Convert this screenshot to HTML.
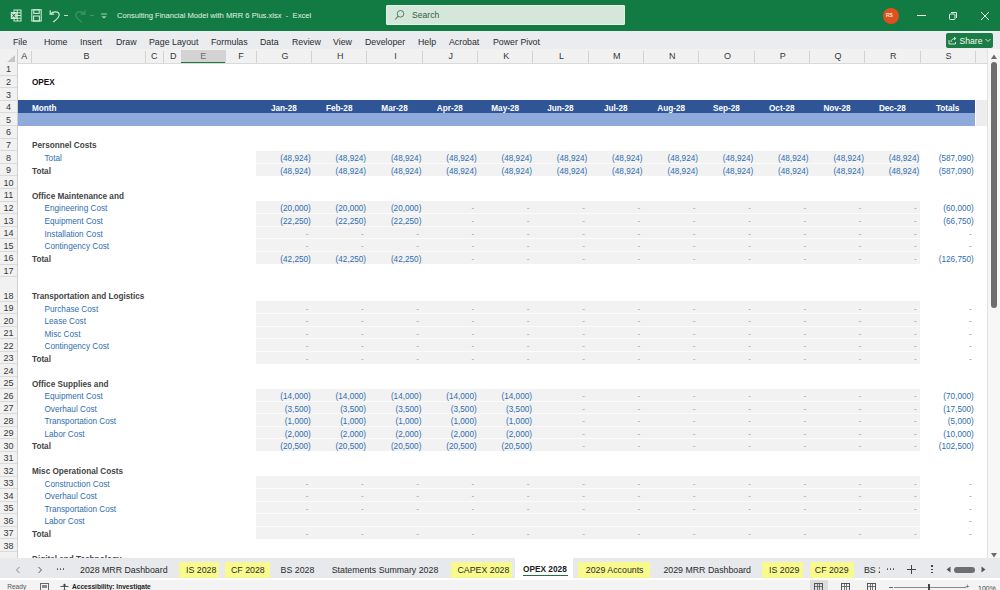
<!DOCTYPE html><html><head><meta charset="utf-8"><style>
html,body{margin:0;padding:0;width:1000px;height:590px;overflow:hidden;background:#fff;}
body{position:relative;font-family:"Liberation Sans", sans-serif;}
.ab{position:absolute;}
.t{position:absolute;white-space:nowrap;line-height:1;}
</style></head><body>
<div class="ab" style="left:0;top:0;width:1000px;height:31px;background:#127b43"></div>
<svg class="ab" style="left:10px;top:9px" width="12" height="13" viewBox="0 0 12 13"><g fill="none" stroke="#cdebd7" stroke-width="1"><rect x="4" y="1" width="7" height="11"/><line x1="7.3" y1="1" x2="7.3" y2="12"/><line x1="4" y1="3.8" x2="11" y2="3.8"/><line x1="4" y1="6.5" x2="11" y2="6.5"/><line x1="4" y1="9.2" x2="11" y2="9.2"/></g><rect x="0.8" y="3" width="6" height="7" fill="#cdebd7"/><path d="M2.3 4.8 L5.3 8.3 M5.3 4.8 L2.3 8.3" stroke="#1d5e38" stroke-width="1"/></svg>
<svg class="ab" style="left:31px;top:9px" width="11" height="13" viewBox="0 0 11 13"><g fill="none" stroke="#cdebd7" stroke-width="1.1"><rect x="0.8" y="0.8" width="9.4" height="11.2"/><rect x="2.8" y="0.8" width="5.4" height="3.6"/><rect x="2.6" y="7" width="5.8" height="5"/></g></svg>
<svg class="ab" style="left:49px;top:9px" width="12" height="14" viewBox="0 0 12 14"><path d="M1.2 1.2 L1.2 5.2 L5.2 5.2" fill="none" stroke="#cdebd7" stroke-width="1.2"/><path d="M1.5 5 C3.5 2.2 9.8 1.8 10.2 5.6 C10.5 8.5 7.5 10.5 4.2 13" fill="none" stroke="#cdebd7" stroke-width="1.2"/></svg>
<div class="ab" style="left:64px;top:14.5px;width:4px;height:1.2px;background:#b9e0c6"></div>
<svg class="ab" style="left:74px;top:9px" width="12" height="14" viewBox="0 0 12 14"><path d="M10.8 1.2 L10.8 5.2 L6.8 5.2" fill="none" stroke="#3f9763" stroke-width="1.2"/><path d="M10.5 5 C8.5 2.2 2.2 1.8 1.8 5.6 C1.5 8.5 4.5 10.5 7.8 13" fill="none" stroke="#3f9763" stroke-width="1.2"/></svg>
<div class="ab" style="left:90px;top:14.5px;width:4px;height:1.2px;background:#3f9763"></div>
<svg class="ab" style="left:100px;top:12px" width="8" height="8" viewBox="0 0 8 8"><line x1="1" y1="2" x2="7" y2="2" stroke="#9fd3b2" stroke-width="1"/><path d="M1.5 4.3 L6.5 4.3 L4 6.8Z" fill="#9fd3b2"/></svg>
<div class="t" style="left:117px;top:11.5px;font-size:7.6px;color:#e2f3e8">Consulting Financial Model with MRR 6 Plus.xlsx&nbsp; -&nbsp; Excel</div>
<div class="ab" style="left:385.5px;top:5.4px;width:239.5px;height:19.8px;background:#d5e7da;border-radius:1px;border:1px solid #e2f0e6;box-sizing:border-box"></div>
<svg class="ab" style="left:394px;top:9px" width="11" height="12" viewBox="0 0 11 12"><circle cx="6.5" cy="4.8" r="3.3" fill="none" stroke="#55806a" stroke-width="1"/><line x1="4.2" y1="7.2" x2="1.2" y2="10.5" stroke="#55806a" stroke-width="1.1"/></svg>
<div class="t" style="left:412px;top:10.5px;font-size:8.6px;color:#335f41">Search</div>
<div class="ab" style="left:883px;top:8px;width:16px;height:16px;border-radius:50%;background:#e0501e"></div>
<div class="t" style="left:886px;top:13px;font-size:5px;color:#fde3d6;font-weight:bold">RS</div>
<div class="ab" style="left:917px;top:15px;width:9px;height:1px;background:#e6f4ea"></div>
<svg class="ab" style="left:948px;top:11px" width="10" height="10" viewBox="0 0 10 10"><path d="M3 1.5 H8.5 V7" fill="none" stroke="#e6f4ea" stroke-width="1"/><rect x="1.5" y="3" width="5.5" height="5.5" fill="none" stroke="#e6f4ea" stroke-width="1" rx="0.8"/></svg>
<svg class="ab" style="left:980px;top:11px" width="10" height="10" viewBox="0 0 10 10"><path d="M1 1 L9 9 M9 1 L1 9" stroke="#e6f4ea" stroke-width="1"/></svg>
<div class="ab" style="left:0;top:31px;width:1000px;height:18px;background:#eaecef"></div>
<div class="t" style="left:13px;top:38px;font-size:8.8px;color:#2b2b2b">File</div>
<div class="t" style="left:44px;top:38px;font-size:8.8px;color:#2b2b2b">Home</div>
<div class="t" style="left:80px;top:38px;font-size:8.8px;color:#2b2b2b">Insert</div>
<div class="t" style="left:116px;top:38px;font-size:8.8px;color:#2b2b2b">Draw</div>
<div class="t" style="left:149px;top:38px;font-size:8.8px;color:#2b2b2b">Page Layout</div>
<div class="t" style="left:211px;top:38px;font-size:8.8px;color:#2b2b2b">Formulas</div>
<div class="t" style="left:260px;top:38px;font-size:8.8px;color:#2b2b2b">Data</div>
<div class="t" style="left:292px;top:38px;font-size:8.8px;color:#2b2b2b">Review</div>
<div class="t" style="left:333px;top:38px;font-size:8.8px;color:#2b2b2b">View</div>
<div class="t" style="left:365px;top:38px;font-size:8.8px;color:#2b2b2b">Developer</div>
<div class="t" style="left:418px;top:38px;font-size:8.8px;color:#2b2b2b">Help</div>
<div class="t" style="left:449px;top:38px;font-size:8.8px;color:#2b2b2b">Acrobat</div>
<div class="t" style="left:493px;top:38px;font-size:8.8px;color:#2b2b2b">Power Pivot</div>
<div class="ab" style="left:946px;top:33.2px;width:46.5px;height:15.3px;background:#1b7d45;border-radius:2px"></div>
<svg class="ab" style="left:948px;top:36px" width="9" height="9" viewBox="0 0 9 9"><path d="M1 4 V8 H7.5 V6" fill="none" stroke="#e0f2e6" stroke-width="0.9"/><path d="M3 6 C3 3.5 5 2.5 7.5 2.5 M6 1 L7.8 2.5 L6 4" fill="none" stroke="#e0f2e6" stroke-width="0.9"/></svg>
<div class="t" style="left:959.5px;top:37px;font-size:8.6px;color:#f0faf3">Share</div>
<svg class="ab" style="left:985px;top:38px" width="6" height="5" viewBox="0 0 6 5"><path d="M0.5 1 L3 3.5 L5.5 1" fill="none" stroke="#e0f2e6" stroke-width="0.9"/></svg>
<div class="ab" style="left:0;top:49px;width:988px;height:14.5px;background:#f1f1f1;border-bottom:1px solid #dadada;box-sizing:border-box"></div>
<svg class="ab" style="left:5px;top:54px" width="11" height="9" viewBox="0 0 11 9"><path d="M10 1 L10 8 L2 8 Z" fill="#c6c6c6"/></svg>
<div class="ab" style="left:30.5px;top:51px;width:0.8px;height:12px;background:#d2d2d2"></div>
<div class="t" style="left:17.5px;top:52.3px;width:13.5px;text-align:center;font-size:9px;color:#383838">A</div>
<div class="ab" style="left:144.5px;top:51px;width:0.8px;height:12px;background:#d2d2d2"></div>
<div class="t" style="left:29.5px;top:52.3px;width:114.0px;text-align:center;font-size:9px;color:#383838">B</div>
<div class="ab" style="left:163.0px;top:51px;width:0.8px;height:12px;background:#d2d2d2"></div>
<div class="t" style="left:145.0px;top:52.3px;width:18.5px;text-align:center;font-size:9px;color:#383838">C</div>
<div class="ab" style="left:180.5px;top:51px;width:0.8px;height:12px;background:#d2d2d2"></div>
<div class="t" style="left:164.5px;top:52.3px;width:17.5px;text-align:center;font-size:9px;color:#383838">D</div>
<div class="ab" style="left:181.0px;top:49.5px;width:44.5px;height:13.5px;background:#d3d3d3;border-bottom:1.5px solid #1d7a45;box-sizing:border-box"></div>
<div class="ab" style="left:225.0px;top:51px;width:0.8px;height:12px;background:#d2d2d2"></div>
<div class="t" style="left:181.0px;top:52.3px;width:44.5px;text-align:center;font-size:9px;color:#707070">E</div>
<div class="ab" style="left:255.8px;top:51px;width:0.8px;height:12px;background:#d2d2d2"></div>
<div class="t" style="left:225.5px;top:52.3px;width:30.8px;text-align:center;font-size:9px;color:#383838">F</div>
<div class="ab" style="left:311.1px;top:51px;width:0.8px;height:12px;background:#d2d2d2"></div>
<div class="t" style="left:257.3px;top:52.3px;width:55.3px;text-align:center;font-size:9px;color:#383838">G</div>
<div class="ab" style="left:366.4px;top:51px;width:0.8px;height:12px;background:#d2d2d2"></div>
<div class="t" style="left:312.6px;top:52.3px;width:55.3px;text-align:center;font-size:9px;color:#383838">H</div>
<div class="ab" style="left:421.7px;top:51px;width:0.8px;height:12px;background:#d2d2d2"></div>
<div class="t" style="left:367.9px;top:52.3px;width:55.3px;text-align:center;font-size:9px;color:#383838">I</div>
<div class="ab" style="left:477.0px;top:51px;width:0.8px;height:12px;background:#d2d2d2"></div>
<div class="t" style="left:423.2px;top:52.3px;width:55.3px;text-align:center;font-size:9px;color:#383838">J</div>
<div class="ab" style="left:532.3px;top:51px;width:0.8px;height:12px;background:#d2d2d2"></div>
<div class="t" style="left:478.5px;top:52.3px;width:55.3px;text-align:center;font-size:9px;color:#383838">K</div>
<div class="ab" style="left:587.6px;top:51px;width:0.8px;height:12px;background:#d2d2d2"></div>
<div class="t" style="left:533.8px;top:52.3px;width:55.3px;text-align:center;font-size:9px;color:#383838">L</div>
<div class="ab" style="left:643.0px;top:51px;width:0.8px;height:12px;background:#d2d2d2"></div>
<div class="t" style="left:589.1px;top:52.3px;width:55.3px;text-align:center;font-size:9px;color:#383838">M</div>
<div class="ab" style="left:698.3px;top:51px;width:0.8px;height:12px;background:#d2d2d2"></div>
<div class="t" style="left:644.5px;top:52.3px;width:55.3px;text-align:center;font-size:9px;color:#383838">N</div>
<div class="ab" style="left:753.6px;top:51px;width:0.8px;height:12px;background:#d2d2d2"></div>
<div class="t" style="left:699.8px;top:52.3px;width:55.3px;text-align:center;font-size:9px;color:#383838">O</div>
<div class="ab" style="left:808.9px;top:51px;width:0.8px;height:12px;background:#d2d2d2"></div>
<div class="t" style="left:755.1px;top:52.3px;width:55.3px;text-align:center;font-size:9px;color:#383838">P</div>
<div class="ab" style="left:864.2px;top:51px;width:0.8px;height:12px;background:#d2d2d2"></div>
<div class="t" style="left:810.4px;top:52.3px;width:55.3px;text-align:center;font-size:9px;color:#383838">Q</div>
<div class="ab" style="left:919.5px;top:51px;width:0.8px;height:12px;background:#d2d2d2"></div>
<div class="t" style="left:865.7px;top:52.3px;width:55.3px;text-align:center;font-size:9px;color:#383838">R</div>
<div class="ab" style="left:974.5px;top:51px;width:0.8px;height:12px;background:#d2d2d2"></div>
<div class="t" style="left:921.0px;top:52.3px;width:55.0px;text-align:center;font-size:9px;color:#383838">S</div>
<div class="ab" style="left:987.5px;top:51px;width:0.8px;height:12px;background:#d2d2d2"></div>
<div class="ab" style="left:17px;top:49px;width:1px;height:510px;background:#cfcfcf"></div>
<div class="ab" style="left:0;top:63.4px;width:17px;height:496px;background:#f1f1f1"></div>
<div class="ab" style="left:0;top:74.6px;width:17px;height:1px;background:#dadada"></div>
<div class="t" style="left:0;top:65.4px;width:17px;text-align:center;font-size:9px;color:#383838">1</div>
<div class="ab" style="left:0;top:87.2px;width:17px;height:1px;background:#dadada"></div>
<div class="t" style="left:0;top:78.0px;width:17px;text-align:center;font-size:9px;color:#383838">2</div>
<div class="ab" style="left:0;top:99.8px;width:17px;height:1px;background:#dadada"></div>
<div class="t" style="left:0;top:90.6px;width:17px;text-align:center;font-size:9px;color:#383838">3</div>
<div class="ab" style="left:0;top:112.4px;width:17px;height:1px;background:#dadada"></div>
<div class="t" style="left:0;top:103.2px;width:17px;text-align:center;font-size:9px;color:#383838">4</div>
<div class="ab" style="left:0;top:125.0px;width:17px;height:1px;background:#dadada"></div>
<div class="t" style="left:0;top:115.8px;width:17px;text-align:center;font-size:9px;color:#383838">5</div>
<div class="ab" style="left:0;top:137.6px;width:17px;height:1px;background:#dadada"></div>
<div class="t" style="left:0;top:128.4px;width:17px;text-align:center;font-size:9px;color:#383838">6</div>
<div class="ab" style="left:0;top:150.2px;width:17px;height:1px;background:#dadada"></div>
<div class="t" style="left:0;top:141.0px;width:17px;text-align:center;font-size:9px;color:#383838">7</div>
<div class="ab" style="left:0;top:162.8px;width:17px;height:1px;background:#dadada"></div>
<div class="t" style="left:0;top:153.6px;width:17px;text-align:center;font-size:9px;color:#383838">8</div>
<div class="ab" style="left:0;top:175.4px;width:17px;height:1px;background:#dadada"></div>
<div class="t" style="left:0;top:166.2px;width:17px;text-align:center;font-size:9px;color:#383838">9</div>
<div class="ab" style="left:0;top:188.0px;width:17px;height:1px;background:#dadada"></div>
<div class="t" style="left:0;top:178.8px;width:17px;text-align:center;font-size:9px;color:#383838">10</div>
<div class="ab" style="left:0;top:200.6px;width:17px;height:1px;background:#dadada"></div>
<div class="t" style="left:0;top:191.4px;width:17px;text-align:center;font-size:9px;color:#383838">11</div>
<div class="ab" style="left:0;top:213.2px;width:17px;height:1px;background:#dadada"></div>
<div class="t" style="left:0;top:204.0px;width:17px;text-align:center;font-size:9px;color:#383838">12</div>
<div class="ab" style="left:0;top:225.8px;width:17px;height:1px;background:#dadada"></div>
<div class="t" style="left:0;top:216.6px;width:17px;text-align:center;font-size:9px;color:#383838">13</div>
<div class="ab" style="left:0;top:238.4px;width:17px;height:1px;background:#dadada"></div>
<div class="t" style="left:0;top:229.2px;width:17px;text-align:center;font-size:9px;color:#383838">14</div>
<div class="ab" style="left:0;top:251.0px;width:17px;height:1px;background:#dadada"></div>
<div class="t" style="left:0;top:241.8px;width:17px;text-align:center;font-size:9px;color:#383838">15</div>
<div class="ab" style="left:0;top:263.6px;width:17px;height:1px;background:#dadada"></div>
<div class="t" style="left:0;top:254.4px;width:17px;text-align:center;font-size:9px;color:#383838">16</div>
<div class="ab" style="left:0;top:276.2px;width:17px;height:1px;background:#dadada"></div>
<div class="t" style="left:0;top:267.0px;width:17px;text-align:center;font-size:9px;color:#383838">17</div>
<div class="ab" style="left:0;top:300.8px;width:17px;height:1px;background:#dadada"></div>
<div class="t" style="left:0;top:291.7px;width:17px;text-align:center;font-size:9px;color:#383838">18</div>
<div class="ab" style="left:0;top:313.3px;width:17px;height:1px;background:#dadada"></div>
<div class="t" style="left:0;top:304.2px;width:17px;text-align:center;font-size:9px;color:#383838">19</div>
<div class="ab" style="left:0;top:325.8px;width:17px;height:1px;background:#dadada"></div>
<div class="t" style="left:0;top:316.7px;width:17px;text-align:center;font-size:9px;color:#383838">20</div>
<div class="ab" style="left:0;top:338.3px;width:17px;height:1px;background:#dadada"></div>
<div class="t" style="left:0;top:329.2px;width:17px;text-align:center;font-size:9px;color:#383838">21</div>
<div class="ab" style="left:0;top:350.8px;width:17px;height:1px;background:#dadada"></div>
<div class="t" style="left:0;top:341.7px;width:17px;text-align:center;font-size:9px;color:#383838">22</div>
<div class="ab" style="left:0;top:363.3px;width:17px;height:1px;background:#dadada"></div>
<div class="t" style="left:0;top:354.2px;width:17px;text-align:center;font-size:9px;color:#383838">23</div>
<div class="ab" style="left:0;top:375.8px;width:17px;height:1px;background:#dadada"></div>
<div class="t" style="left:0;top:366.7px;width:17px;text-align:center;font-size:9px;color:#383838">24</div>
<div class="ab" style="left:0;top:388.3px;width:17px;height:1px;background:#dadada"></div>
<div class="t" style="left:0;top:379.2px;width:17px;text-align:center;font-size:9px;color:#383838">25</div>
<div class="ab" style="left:0;top:400.8px;width:17px;height:1px;background:#dadada"></div>
<div class="t" style="left:0;top:391.7px;width:17px;text-align:center;font-size:9px;color:#383838">26</div>
<div class="ab" style="left:0;top:413.3px;width:17px;height:1px;background:#dadada"></div>
<div class="t" style="left:0;top:404.2px;width:17px;text-align:center;font-size:9px;color:#383838">27</div>
<div class="ab" style="left:0;top:425.8px;width:17px;height:1px;background:#dadada"></div>
<div class="t" style="left:0;top:416.7px;width:17px;text-align:center;font-size:9px;color:#383838">28</div>
<div class="ab" style="left:0;top:438.3px;width:17px;height:1px;background:#dadada"></div>
<div class="t" style="left:0;top:429.2px;width:17px;text-align:center;font-size:9px;color:#383838">29</div>
<div class="ab" style="left:0;top:450.8px;width:17px;height:1px;background:#dadada"></div>
<div class="t" style="left:0;top:441.7px;width:17px;text-align:center;font-size:9px;color:#383838">30</div>
<div class="ab" style="left:0;top:463.3px;width:17px;height:1px;background:#dadada"></div>
<div class="t" style="left:0;top:454.2px;width:17px;text-align:center;font-size:9px;color:#383838">31</div>
<div class="ab" style="left:0;top:475.8px;width:17px;height:1px;background:#dadada"></div>
<div class="t" style="left:0;top:466.7px;width:17px;text-align:center;font-size:9px;color:#383838">32</div>
<div class="ab" style="left:0;top:488.3px;width:17px;height:1px;background:#dadada"></div>
<div class="t" style="left:0;top:479.2px;width:17px;text-align:center;font-size:9px;color:#383838">33</div>
<div class="ab" style="left:0;top:500.8px;width:17px;height:1px;background:#dadada"></div>
<div class="t" style="left:0;top:491.7px;width:17px;text-align:center;font-size:9px;color:#383838">34</div>
<div class="ab" style="left:0;top:513.3px;width:17px;height:1px;background:#dadada"></div>
<div class="t" style="left:0;top:504.2px;width:17px;text-align:center;font-size:9px;color:#383838">35</div>
<div class="ab" style="left:0;top:525.8px;width:17px;height:1px;background:#dadada"></div>
<div class="t" style="left:0;top:516.7px;width:17px;text-align:center;font-size:9px;color:#383838">36</div>
<div class="ab" style="left:0;top:538.3px;width:17px;height:1px;background:#dadada"></div>
<div class="t" style="left:0;top:529.2px;width:17px;text-align:center;font-size:9px;color:#383838">37</div>
<div class="ab" style="left:0;top:550.8px;width:17px;height:1px;background:#dadada"></div>
<div class="t" style="left:0;top:541.7px;width:17px;text-align:center;font-size:9px;color:#383838">38</div>
<div class="ab" style="left:0;top:563.3px;width:17px;height:1px;background:#dadada"></div>
<div class="t" style="left:32.0px;top:79.4px;font-size:8.2px;color:#111;font-weight:bold">OPEX</div>
<div class="ab" style="left:18px;top:100.1px;width:957px;height:12.7px;background:#2f5597"></div>
<div class="ab" style="left:18px;top:113.3px;width:957px;height:12.7px;background:#8eaadb"></div>
<div class="t" style="left:32.0px;top:104.5px;font-size:8.2px;color:#fff;font-weight:bold">Month</div>
<div class="ab" style="left:975.5px;top:100px;width:11.5px;height:25.5px;background:#ededed"></div>
<div class="t" style="left:256.3px;top:104.5px;width:55.3px;text-align:center;font-size:8.2px;color:#fff;font-weight:bold">Jan-28</div>
<div class="t" style="left:311.6px;top:104.5px;width:55.3px;text-align:center;font-size:8.2px;color:#fff;font-weight:bold">Feb-28</div>
<div class="t" style="left:366.9px;top:104.5px;width:55.3px;text-align:center;font-size:8.2px;color:#fff;font-weight:bold">Mar-28</div>
<div class="t" style="left:422.2px;top:104.5px;width:55.3px;text-align:center;font-size:8.2px;color:#fff;font-weight:bold">Apr-28</div>
<div class="t" style="left:477.5px;top:104.5px;width:55.3px;text-align:center;font-size:8.2px;color:#fff;font-weight:bold">May-28</div>
<div class="t" style="left:532.8px;top:104.5px;width:55.3px;text-align:center;font-size:8.2px;color:#fff;font-weight:bold">Jun-28</div>
<div class="t" style="left:588.1px;top:104.5px;width:55.3px;text-align:center;font-size:8.2px;color:#fff;font-weight:bold">Jul-28</div>
<div class="t" style="left:643.5px;top:104.5px;width:55.3px;text-align:center;font-size:8.2px;color:#fff;font-weight:bold">Aug-28</div>
<div class="t" style="left:698.8px;top:104.5px;width:55.3px;text-align:center;font-size:8.2px;color:#fff;font-weight:bold">Sep-28</div>
<div class="t" style="left:754.1px;top:104.5px;width:55.3px;text-align:center;font-size:8.2px;color:#fff;font-weight:bold">Oct-28</div>
<div class="t" style="left:809.4px;top:104.5px;width:55.3px;text-align:center;font-size:8.2px;color:#fff;font-weight:bold">Nov-28</div>
<div class="t" style="left:864.7px;top:104.5px;width:55.3px;text-align:center;font-size:8.2px;color:#fff;font-weight:bold">Dec-28</div>
<div class="t" style="left:920.0px;top:104.5px;width:55.3px;text-align:center;font-size:8.2px;color:#fff;font-weight:bold">Totals</div>
<div class="t" style="left:32.0px;top:142.4px;font-size:8.2px;color:#444444;font-weight:bold">Personnel Costs</div>
<div class="ab" style="left:256px;top:150.7px;width:663.6px;height:25.2px;background:#f2f2f2"></div>
<div class="ab" style="left:256px;top:162.7px;width:663.6px;height:1px;background:#fbfbfb"></div>
<div class="t" style="left:44.5px;top:155.0px;font-size:8.2px;color:#2f6eb0;font-weight:normal">Total</div>
<div class="t" style="left:256.3px;top:155.0px;width:54.5px;text-align:right;font-size:8.2px;color:#2f6eb0;font-weight:normal">(48,924)</div>
<div class="t" style="left:311.6px;top:155.0px;width:54.5px;text-align:right;font-size:8.2px;color:#2f6eb0;font-weight:normal">(48,924)</div>
<div class="t" style="left:366.9px;top:155.0px;width:54.5px;text-align:right;font-size:8.2px;color:#2f6eb0;font-weight:normal">(48,924)</div>
<div class="t" style="left:422.2px;top:155.0px;width:54.5px;text-align:right;font-size:8.2px;color:#2f6eb0;font-weight:normal">(48,924)</div>
<div class="t" style="left:477.5px;top:155.0px;width:54.5px;text-align:right;font-size:8.2px;color:#2f6eb0;font-weight:normal">(48,924)</div>
<div class="t" style="left:532.8px;top:155.0px;width:54.5px;text-align:right;font-size:8.2px;color:#2f6eb0;font-weight:normal">(48,924)</div>
<div class="t" style="left:588.1px;top:155.0px;width:54.5px;text-align:right;font-size:8.2px;color:#2f6eb0;font-weight:normal">(48,924)</div>
<div class="t" style="left:643.5px;top:155.0px;width:54.5px;text-align:right;font-size:8.2px;color:#2f6eb0;font-weight:normal">(48,924)</div>
<div class="t" style="left:698.8px;top:155.0px;width:54.5px;text-align:right;font-size:8.2px;color:#2f6eb0;font-weight:normal">(48,924)</div>
<div class="t" style="left:754.1px;top:155.0px;width:54.5px;text-align:right;font-size:8.2px;color:#2f6eb0;font-weight:normal">(48,924)</div>
<div class="t" style="left:809.4px;top:155.0px;width:54.5px;text-align:right;font-size:8.2px;color:#2f6eb0;font-weight:normal">(48,924)</div>
<div class="t" style="left:864.7px;top:155.0px;width:54.5px;text-align:right;font-size:8.2px;color:#2f6eb0;font-weight:normal">(48,924)</div>
<div class="t" style="left:920.0px;top:155.0px;width:53.8px;text-align:right;font-size:8.2px;color:#2f6eb0;font-weight:normal">(587,090)</div>
<div class="t" style="left:32.0px;top:167.6px;font-size:8.2px;color:#444444;font-weight:bold">Total</div>
<div class="t" style="left:256.3px;top:167.6px;width:54.5px;text-align:right;font-size:8.2px;color:#2f6eb0;font-weight:normal">(48,924)</div>
<div class="t" style="left:311.6px;top:167.6px;width:54.5px;text-align:right;font-size:8.2px;color:#2f6eb0;font-weight:normal">(48,924)</div>
<div class="t" style="left:366.9px;top:167.6px;width:54.5px;text-align:right;font-size:8.2px;color:#2f6eb0;font-weight:normal">(48,924)</div>
<div class="t" style="left:422.2px;top:167.6px;width:54.5px;text-align:right;font-size:8.2px;color:#2f6eb0;font-weight:normal">(48,924)</div>
<div class="t" style="left:477.5px;top:167.6px;width:54.5px;text-align:right;font-size:8.2px;color:#2f6eb0;font-weight:normal">(48,924)</div>
<div class="t" style="left:532.8px;top:167.6px;width:54.5px;text-align:right;font-size:8.2px;color:#2f6eb0;font-weight:normal">(48,924)</div>
<div class="t" style="left:588.1px;top:167.6px;width:54.5px;text-align:right;font-size:8.2px;color:#2f6eb0;font-weight:normal">(48,924)</div>
<div class="t" style="left:643.5px;top:167.6px;width:54.5px;text-align:right;font-size:8.2px;color:#2f6eb0;font-weight:normal">(48,924)</div>
<div class="t" style="left:698.8px;top:167.6px;width:54.5px;text-align:right;font-size:8.2px;color:#2f6eb0;font-weight:normal">(48,924)</div>
<div class="t" style="left:754.1px;top:167.6px;width:54.5px;text-align:right;font-size:8.2px;color:#2f6eb0;font-weight:normal">(48,924)</div>
<div class="t" style="left:809.4px;top:167.6px;width:54.5px;text-align:right;font-size:8.2px;color:#2f6eb0;font-weight:normal">(48,924)</div>
<div class="t" style="left:864.7px;top:167.6px;width:54.5px;text-align:right;font-size:8.2px;color:#2f6eb0;font-weight:normal">(48,924)</div>
<div class="t" style="left:920.0px;top:167.6px;width:53.8px;text-align:right;font-size:8.2px;color:#2f6eb0;font-weight:normal">(587,090)</div>
<div class="t" style="left:32.0px;top:192.8px;font-size:8.2px;color:#444444;font-weight:bold">Office Maintenance and</div>
<div class="ab" style="left:256px;top:201.1px;width:663.6px;height:63.0px;background:#f2f2f2"></div>
<div class="ab" style="left:256px;top:213.1px;width:663.6px;height:1px;background:#fbfbfb"></div>
<div class="ab" style="left:256px;top:225.7px;width:663.6px;height:1px;background:#fbfbfb"></div>
<div class="ab" style="left:256px;top:238.3px;width:663.6px;height:1px;background:#fbfbfb"></div>
<div class="ab" style="left:256px;top:250.9px;width:663.6px;height:1px;background:#fbfbfb"></div>
<div class="t" style="left:44.5px;top:205.4px;font-size:8.2px;color:#2f6eb0;font-weight:normal">Engineering Cost</div>
<div class="t" style="left:256.3px;top:205.4px;width:54.5px;text-align:right;font-size:8.2px;color:#2f6eb0;font-weight:normal">(20,000)</div>
<div class="t" style="left:311.6px;top:205.4px;width:54.5px;text-align:right;font-size:8.2px;color:#2f6eb0;font-weight:normal">(20,000)</div>
<div class="t" style="left:366.9px;top:205.4px;width:54.5px;text-align:right;font-size:8.2px;color:#2f6eb0;font-weight:normal">(20,000)</div>
<div class="t" style="left:422.2px;top:205.4px;width:52.1px;text-align:right;font-size:8.2px;color:#a6a6a6">-</div>
<div class="t" style="left:477.5px;top:205.4px;width:52.1px;text-align:right;font-size:8.2px;color:#a6a6a6">-</div>
<div class="t" style="left:532.8px;top:205.4px;width:52.1px;text-align:right;font-size:8.2px;color:#a6a6a6">-</div>
<div class="t" style="left:588.1px;top:205.4px;width:52.1px;text-align:right;font-size:8.2px;color:#a6a6a6">-</div>
<div class="t" style="left:643.5px;top:205.4px;width:52.1px;text-align:right;font-size:8.2px;color:#a6a6a6">-</div>
<div class="t" style="left:698.8px;top:205.4px;width:52.1px;text-align:right;font-size:8.2px;color:#a6a6a6">-</div>
<div class="t" style="left:754.1px;top:205.4px;width:52.1px;text-align:right;font-size:8.2px;color:#a6a6a6">-</div>
<div class="t" style="left:809.4px;top:205.4px;width:52.1px;text-align:right;font-size:8.2px;color:#a6a6a6">-</div>
<div class="t" style="left:864.7px;top:205.4px;width:52.1px;text-align:right;font-size:8.2px;color:#a6a6a6">-</div>
<div class="t" style="left:920.0px;top:205.4px;width:53.8px;text-align:right;font-size:8.2px;color:#2f6eb0;font-weight:normal">(60,000)</div>
<div class="t" style="left:44.5px;top:218.0px;font-size:8.2px;color:#2f6eb0;font-weight:normal">Equipment Cost</div>
<div class="t" style="left:256.3px;top:218.0px;width:54.5px;text-align:right;font-size:8.2px;color:#2f6eb0;font-weight:normal">(22,250)</div>
<div class="t" style="left:311.6px;top:218.0px;width:54.5px;text-align:right;font-size:8.2px;color:#2f6eb0;font-weight:normal">(22,250)</div>
<div class="t" style="left:366.9px;top:218.0px;width:54.5px;text-align:right;font-size:8.2px;color:#2f6eb0;font-weight:normal">(22,250)</div>
<div class="t" style="left:422.2px;top:218.0px;width:52.1px;text-align:right;font-size:8.2px;color:#a6a6a6">-</div>
<div class="t" style="left:477.5px;top:218.0px;width:52.1px;text-align:right;font-size:8.2px;color:#a6a6a6">-</div>
<div class="t" style="left:532.8px;top:218.0px;width:52.1px;text-align:right;font-size:8.2px;color:#a6a6a6">-</div>
<div class="t" style="left:588.1px;top:218.0px;width:52.1px;text-align:right;font-size:8.2px;color:#a6a6a6">-</div>
<div class="t" style="left:643.5px;top:218.0px;width:52.1px;text-align:right;font-size:8.2px;color:#a6a6a6">-</div>
<div class="t" style="left:698.8px;top:218.0px;width:52.1px;text-align:right;font-size:8.2px;color:#a6a6a6">-</div>
<div class="t" style="left:754.1px;top:218.0px;width:52.1px;text-align:right;font-size:8.2px;color:#a6a6a6">-</div>
<div class="t" style="left:809.4px;top:218.0px;width:52.1px;text-align:right;font-size:8.2px;color:#a6a6a6">-</div>
<div class="t" style="left:864.7px;top:218.0px;width:52.1px;text-align:right;font-size:8.2px;color:#a6a6a6">-</div>
<div class="t" style="left:920.0px;top:218.0px;width:53.8px;text-align:right;font-size:8.2px;color:#2f6eb0;font-weight:normal">(66,750)</div>
<div class="t" style="left:44.5px;top:230.6px;font-size:8.2px;color:#2f6eb0;font-weight:normal">Installation Cost</div>
<div class="t" style="left:256.3px;top:230.6px;width:52.1px;text-align:right;font-size:8.2px;color:#a6a6a6">-</div>
<div class="t" style="left:311.6px;top:230.6px;width:52.1px;text-align:right;font-size:8.2px;color:#a6a6a6">-</div>
<div class="t" style="left:366.9px;top:230.6px;width:52.1px;text-align:right;font-size:8.2px;color:#a6a6a6">-</div>
<div class="t" style="left:422.2px;top:230.6px;width:52.1px;text-align:right;font-size:8.2px;color:#a6a6a6">-</div>
<div class="t" style="left:477.5px;top:230.6px;width:52.1px;text-align:right;font-size:8.2px;color:#a6a6a6">-</div>
<div class="t" style="left:532.8px;top:230.6px;width:52.1px;text-align:right;font-size:8.2px;color:#a6a6a6">-</div>
<div class="t" style="left:588.1px;top:230.6px;width:52.1px;text-align:right;font-size:8.2px;color:#a6a6a6">-</div>
<div class="t" style="left:643.5px;top:230.6px;width:52.1px;text-align:right;font-size:8.2px;color:#a6a6a6">-</div>
<div class="t" style="left:698.8px;top:230.6px;width:52.1px;text-align:right;font-size:8.2px;color:#a6a6a6">-</div>
<div class="t" style="left:754.1px;top:230.6px;width:52.1px;text-align:right;font-size:8.2px;color:#a6a6a6">-</div>
<div class="t" style="left:809.4px;top:230.6px;width:52.1px;text-align:right;font-size:8.2px;color:#a6a6a6">-</div>
<div class="t" style="left:864.7px;top:230.6px;width:52.1px;text-align:right;font-size:8.2px;color:#a6a6a6">-</div>
<div class="t" style="left:920.0px;top:230.6px;width:51.8px;text-align:right;font-size:8.2px;color:#9c9c9c">-</div>
<div class="t" style="left:44.5px;top:243.2px;font-size:8.2px;color:#2f6eb0;font-weight:normal">Contingency Cost</div>
<div class="t" style="left:256.3px;top:243.2px;width:52.1px;text-align:right;font-size:8.2px;color:#a6a6a6">-</div>
<div class="t" style="left:311.6px;top:243.2px;width:52.1px;text-align:right;font-size:8.2px;color:#a6a6a6">-</div>
<div class="t" style="left:366.9px;top:243.2px;width:52.1px;text-align:right;font-size:8.2px;color:#a6a6a6">-</div>
<div class="t" style="left:422.2px;top:243.2px;width:52.1px;text-align:right;font-size:8.2px;color:#a6a6a6">-</div>
<div class="t" style="left:477.5px;top:243.2px;width:52.1px;text-align:right;font-size:8.2px;color:#a6a6a6">-</div>
<div class="t" style="left:532.8px;top:243.2px;width:52.1px;text-align:right;font-size:8.2px;color:#a6a6a6">-</div>
<div class="t" style="left:588.1px;top:243.2px;width:52.1px;text-align:right;font-size:8.2px;color:#a6a6a6">-</div>
<div class="t" style="left:643.5px;top:243.2px;width:52.1px;text-align:right;font-size:8.2px;color:#a6a6a6">-</div>
<div class="t" style="left:698.8px;top:243.2px;width:52.1px;text-align:right;font-size:8.2px;color:#a6a6a6">-</div>
<div class="t" style="left:754.1px;top:243.2px;width:52.1px;text-align:right;font-size:8.2px;color:#a6a6a6">-</div>
<div class="t" style="left:809.4px;top:243.2px;width:52.1px;text-align:right;font-size:8.2px;color:#a6a6a6">-</div>
<div class="t" style="left:864.7px;top:243.2px;width:52.1px;text-align:right;font-size:8.2px;color:#a6a6a6">-</div>
<div class="t" style="left:920.0px;top:243.2px;width:51.8px;text-align:right;font-size:8.2px;color:#9c9c9c">-</div>
<div class="t" style="left:32.0px;top:255.8px;font-size:8.2px;color:#444444;font-weight:bold">Total</div>
<div class="t" style="left:256.3px;top:255.8px;width:54.5px;text-align:right;font-size:8.2px;color:#2f6eb0;font-weight:normal">(42,250)</div>
<div class="t" style="left:311.6px;top:255.8px;width:54.5px;text-align:right;font-size:8.2px;color:#2f6eb0;font-weight:normal">(42,250)</div>
<div class="t" style="left:366.9px;top:255.8px;width:54.5px;text-align:right;font-size:8.2px;color:#2f6eb0;font-weight:normal">(42,250)</div>
<div class="t" style="left:422.2px;top:255.8px;width:52.1px;text-align:right;font-size:8.2px;color:#a6a6a6">-</div>
<div class="t" style="left:477.5px;top:255.8px;width:52.1px;text-align:right;font-size:8.2px;color:#a6a6a6">-</div>
<div class="t" style="left:532.8px;top:255.8px;width:52.1px;text-align:right;font-size:8.2px;color:#a6a6a6">-</div>
<div class="t" style="left:588.1px;top:255.8px;width:52.1px;text-align:right;font-size:8.2px;color:#a6a6a6">-</div>
<div class="t" style="left:643.5px;top:255.8px;width:52.1px;text-align:right;font-size:8.2px;color:#a6a6a6">-</div>
<div class="t" style="left:698.8px;top:255.8px;width:52.1px;text-align:right;font-size:8.2px;color:#a6a6a6">-</div>
<div class="t" style="left:754.1px;top:255.8px;width:52.1px;text-align:right;font-size:8.2px;color:#a6a6a6">-</div>
<div class="t" style="left:809.4px;top:255.8px;width:52.1px;text-align:right;font-size:8.2px;color:#a6a6a6">-</div>
<div class="t" style="left:864.7px;top:255.8px;width:52.1px;text-align:right;font-size:8.2px;color:#a6a6a6">-</div>
<div class="t" style="left:920.0px;top:255.8px;width:53.8px;text-align:right;font-size:8.2px;color:#2f6eb0;font-weight:normal">(126,750)</div>
<div class="t" style="left:32.0px;top:293.1px;font-size:8.2px;color:#444444;font-weight:bold">Transportation and Logistics</div>
<div class="ab" style="left:256px;top:301.3px;width:663.6px;height:62.5px;background:#f2f2f2"></div>
<div class="ab" style="left:256px;top:313.2px;width:663.6px;height:1px;background:#fbfbfb"></div>
<div class="ab" style="left:256px;top:325.7px;width:663.6px;height:1px;background:#fbfbfb"></div>
<div class="ab" style="left:256px;top:338.2px;width:663.6px;height:1px;background:#fbfbfb"></div>
<div class="ab" style="left:256px;top:350.7px;width:663.6px;height:1px;background:#fbfbfb"></div>
<div class="t" style="left:44.5px;top:305.6px;font-size:8.2px;color:#2f6eb0;font-weight:normal">Purchase Cost</div>
<div class="t" style="left:256.3px;top:305.6px;width:52.1px;text-align:right;font-size:8.2px;color:#a6a6a6">-</div>
<div class="t" style="left:311.6px;top:305.6px;width:52.1px;text-align:right;font-size:8.2px;color:#a6a6a6">-</div>
<div class="t" style="left:366.9px;top:305.6px;width:52.1px;text-align:right;font-size:8.2px;color:#a6a6a6">-</div>
<div class="t" style="left:422.2px;top:305.6px;width:52.1px;text-align:right;font-size:8.2px;color:#a6a6a6">-</div>
<div class="t" style="left:477.5px;top:305.6px;width:52.1px;text-align:right;font-size:8.2px;color:#a6a6a6">-</div>
<div class="t" style="left:532.8px;top:305.6px;width:52.1px;text-align:right;font-size:8.2px;color:#a6a6a6">-</div>
<div class="t" style="left:588.1px;top:305.6px;width:52.1px;text-align:right;font-size:8.2px;color:#a6a6a6">-</div>
<div class="t" style="left:643.5px;top:305.6px;width:52.1px;text-align:right;font-size:8.2px;color:#a6a6a6">-</div>
<div class="t" style="left:698.8px;top:305.6px;width:52.1px;text-align:right;font-size:8.2px;color:#a6a6a6">-</div>
<div class="t" style="left:754.1px;top:305.6px;width:52.1px;text-align:right;font-size:8.2px;color:#a6a6a6">-</div>
<div class="t" style="left:809.4px;top:305.6px;width:52.1px;text-align:right;font-size:8.2px;color:#a6a6a6">-</div>
<div class="t" style="left:864.7px;top:305.6px;width:52.1px;text-align:right;font-size:8.2px;color:#a6a6a6">-</div>
<div class="t" style="left:920.0px;top:305.6px;width:51.8px;text-align:right;font-size:8.2px;color:#9c9c9c">-</div>
<div class="t" style="left:44.5px;top:318.1px;font-size:8.2px;color:#2f6eb0;font-weight:normal">Lease Cost</div>
<div class="t" style="left:256.3px;top:318.1px;width:52.1px;text-align:right;font-size:8.2px;color:#a6a6a6">-</div>
<div class="t" style="left:311.6px;top:318.1px;width:52.1px;text-align:right;font-size:8.2px;color:#a6a6a6">-</div>
<div class="t" style="left:366.9px;top:318.1px;width:52.1px;text-align:right;font-size:8.2px;color:#a6a6a6">-</div>
<div class="t" style="left:422.2px;top:318.1px;width:52.1px;text-align:right;font-size:8.2px;color:#a6a6a6">-</div>
<div class="t" style="left:477.5px;top:318.1px;width:52.1px;text-align:right;font-size:8.2px;color:#a6a6a6">-</div>
<div class="t" style="left:532.8px;top:318.1px;width:52.1px;text-align:right;font-size:8.2px;color:#a6a6a6">-</div>
<div class="t" style="left:588.1px;top:318.1px;width:52.1px;text-align:right;font-size:8.2px;color:#a6a6a6">-</div>
<div class="t" style="left:643.5px;top:318.1px;width:52.1px;text-align:right;font-size:8.2px;color:#a6a6a6">-</div>
<div class="t" style="left:698.8px;top:318.1px;width:52.1px;text-align:right;font-size:8.2px;color:#a6a6a6">-</div>
<div class="t" style="left:754.1px;top:318.1px;width:52.1px;text-align:right;font-size:8.2px;color:#a6a6a6">-</div>
<div class="t" style="left:809.4px;top:318.1px;width:52.1px;text-align:right;font-size:8.2px;color:#a6a6a6">-</div>
<div class="t" style="left:864.7px;top:318.1px;width:52.1px;text-align:right;font-size:8.2px;color:#a6a6a6">-</div>
<div class="t" style="left:920.0px;top:318.1px;width:51.8px;text-align:right;font-size:8.2px;color:#9c9c9c">-</div>
<div class="t" style="left:44.5px;top:330.6px;font-size:8.2px;color:#2f6eb0;font-weight:normal">Misc Cost</div>
<div class="t" style="left:256.3px;top:330.6px;width:52.1px;text-align:right;font-size:8.2px;color:#a6a6a6">-</div>
<div class="t" style="left:311.6px;top:330.6px;width:52.1px;text-align:right;font-size:8.2px;color:#a6a6a6">-</div>
<div class="t" style="left:366.9px;top:330.6px;width:52.1px;text-align:right;font-size:8.2px;color:#a6a6a6">-</div>
<div class="t" style="left:422.2px;top:330.6px;width:52.1px;text-align:right;font-size:8.2px;color:#a6a6a6">-</div>
<div class="t" style="left:477.5px;top:330.6px;width:52.1px;text-align:right;font-size:8.2px;color:#a6a6a6">-</div>
<div class="t" style="left:532.8px;top:330.6px;width:52.1px;text-align:right;font-size:8.2px;color:#a6a6a6">-</div>
<div class="t" style="left:588.1px;top:330.6px;width:52.1px;text-align:right;font-size:8.2px;color:#a6a6a6">-</div>
<div class="t" style="left:643.5px;top:330.6px;width:52.1px;text-align:right;font-size:8.2px;color:#a6a6a6">-</div>
<div class="t" style="left:698.8px;top:330.6px;width:52.1px;text-align:right;font-size:8.2px;color:#a6a6a6">-</div>
<div class="t" style="left:754.1px;top:330.6px;width:52.1px;text-align:right;font-size:8.2px;color:#a6a6a6">-</div>
<div class="t" style="left:809.4px;top:330.6px;width:52.1px;text-align:right;font-size:8.2px;color:#a6a6a6">-</div>
<div class="t" style="left:864.7px;top:330.6px;width:52.1px;text-align:right;font-size:8.2px;color:#a6a6a6">-</div>
<div class="t" style="left:920.0px;top:330.6px;width:51.8px;text-align:right;font-size:8.2px;color:#9c9c9c">-</div>
<div class="t" style="left:44.5px;top:343.1px;font-size:8.2px;color:#2f6eb0;font-weight:normal">Contingency Cost</div>
<div class="t" style="left:256.3px;top:343.1px;width:52.1px;text-align:right;font-size:8.2px;color:#a6a6a6">-</div>
<div class="t" style="left:311.6px;top:343.1px;width:52.1px;text-align:right;font-size:8.2px;color:#a6a6a6">-</div>
<div class="t" style="left:366.9px;top:343.1px;width:52.1px;text-align:right;font-size:8.2px;color:#a6a6a6">-</div>
<div class="t" style="left:422.2px;top:343.1px;width:52.1px;text-align:right;font-size:8.2px;color:#a6a6a6">-</div>
<div class="t" style="left:477.5px;top:343.1px;width:52.1px;text-align:right;font-size:8.2px;color:#a6a6a6">-</div>
<div class="t" style="left:532.8px;top:343.1px;width:52.1px;text-align:right;font-size:8.2px;color:#a6a6a6">-</div>
<div class="t" style="left:588.1px;top:343.1px;width:52.1px;text-align:right;font-size:8.2px;color:#a6a6a6">-</div>
<div class="t" style="left:643.5px;top:343.1px;width:52.1px;text-align:right;font-size:8.2px;color:#a6a6a6">-</div>
<div class="t" style="left:698.8px;top:343.1px;width:52.1px;text-align:right;font-size:8.2px;color:#a6a6a6">-</div>
<div class="t" style="left:754.1px;top:343.1px;width:52.1px;text-align:right;font-size:8.2px;color:#a6a6a6">-</div>
<div class="t" style="left:809.4px;top:343.1px;width:52.1px;text-align:right;font-size:8.2px;color:#a6a6a6">-</div>
<div class="t" style="left:864.7px;top:343.1px;width:52.1px;text-align:right;font-size:8.2px;color:#a6a6a6">-</div>
<div class="t" style="left:920.0px;top:343.1px;width:51.8px;text-align:right;font-size:8.2px;color:#9c9c9c">-</div>
<div class="t" style="left:32.0px;top:355.6px;font-size:8.2px;color:#444444;font-weight:bold">Total</div>
<div class="t" style="left:256.3px;top:355.6px;width:52.1px;text-align:right;font-size:8.2px;color:#a6a6a6">-</div>
<div class="t" style="left:311.6px;top:355.6px;width:52.1px;text-align:right;font-size:8.2px;color:#a6a6a6">-</div>
<div class="t" style="left:366.9px;top:355.6px;width:52.1px;text-align:right;font-size:8.2px;color:#a6a6a6">-</div>
<div class="t" style="left:422.2px;top:355.6px;width:52.1px;text-align:right;font-size:8.2px;color:#a6a6a6">-</div>
<div class="t" style="left:477.5px;top:355.6px;width:52.1px;text-align:right;font-size:8.2px;color:#a6a6a6">-</div>
<div class="t" style="left:532.8px;top:355.6px;width:52.1px;text-align:right;font-size:8.2px;color:#a6a6a6">-</div>
<div class="t" style="left:588.1px;top:355.6px;width:52.1px;text-align:right;font-size:8.2px;color:#a6a6a6">-</div>
<div class="t" style="left:643.5px;top:355.6px;width:52.1px;text-align:right;font-size:8.2px;color:#a6a6a6">-</div>
<div class="t" style="left:698.8px;top:355.6px;width:52.1px;text-align:right;font-size:8.2px;color:#a6a6a6">-</div>
<div class="t" style="left:754.1px;top:355.6px;width:52.1px;text-align:right;font-size:8.2px;color:#a6a6a6">-</div>
<div class="t" style="left:809.4px;top:355.6px;width:52.1px;text-align:right;font-size:8.2px;color:#a6a6a6">-</div>
<div class="t" style="left:864.7px;top:355.6px;width:52.1px;text-align:right;font-size:8.2px;color:#a6a6a6">-</div>
<div class="t" style="left:920.0px;top:355.6px;width:51.8px;text-align:right;font-size:8.2px;color:#9c9c9c">-</div>
<div class="t" style="left:32.0px;top:380.6px;font-size:8.2px;color:#444444;font-weight:bold">Office Supplies and</div>
<div class="ab" style="left:256px;top:388.8px;width:663.6px;height:62.5px;background:#f2f2f2"></div>
<div class="ab" style="left:256px;top:400.7px;width:663.6px;height:1px;background:#fbfbfb"></div>
<div class="ab" style="left:256px;top:413.2px;width:663.6px;height:1px;background:#fbfbfb"></div>
<div class="ab" style="left:256px;top:425.7px;width:663.6px;height:1px;background:#fbfbfb"></div>
<div class="ab" style="left:256px;top:438.2px;width:663.6px;height:1px;background:#fbfbfb"></div>
<div class="t" style="left:44.5px;top:393.1px;font-size:8.2px;color:#2f6eb0;font-weight:normal">Equipment Cost</div>
<div class="t" style="left:256.3px;top:393.1px;width:54.5px;text-align:right;font-size:8.2px;color:#2f6eb0;font-weight:normal">(14,000)</div>
<div class="t" style="left:311.6px;top:393.1px;width:54.5px;text-align:right;font-size:8.2px;color:#2f6eb0;font-weight:normal">(14,000)</div>
<div class="t" style="left:366.9px;top:393.1px;width:54.5px;text-align:right;font-size:8.2px;color:#2f6eb0;font-weight:normal">(14,000)</div>
<div class="t" style="left:422.2px;top:393.1px;width:54.5px;text-align:right;font-size:8.2px;color:#2f6eb0;font-weight:normal">(14,000)</div>
<div class="t" style="left:477.5px;top:393.1px;width:54.5px;text-align:right;font-size:8.2px;color:#2f6eb0;font-weight:normal">(14,000)</div>
<div class="t" style="left:532.8px;top:393.1px;width:52.1px;text-align:right;font-size:8.2px;color:#a6a6a6">-</div>
<div class="t" style="left:588.1px;top:393.1px;width:52.1px;text-align:right;font-size:8.2px;color:#a6a6a6">-</div>
<div class="t" style="left:643.5px;top:393.1px;width:52.1px;text-align:right;font-size:8.2px;color:#a6a6a6">-</div>
<div class="t" style="left:698.8px;top:393.1px;width:52.1px;text-align:right;font-size:8.2px;color:#a6a6a6">-</div>
<div class="t" style="left:754.1px;top:393.1px;width:52.1px;text-align:right;font-size:8.2px;color:#a6a6a6">-</div>
<div class="t" style="left:809.4px;top:393.1px;width:52.1px;text-align:right;font-size:8.2px;color:#a6a6a6">-</div>
<div class="t" style="left:864.7px;top:393.1px;width:52.1px;text-align:right;font-size:8.2px;color:#a6a6a6">-</div>
<div class="t" style="left:920.0px;top:393.1px;width:53.8px;text-align:right;font-size:8.2px;color:#2f6eb0;font-weight:normal">(70,000)</div>
<div class="t" style="left:44.5px;top:405.6px;font-size:8.2px;color:#2f6eb0;font-weight:normal">Overhaul Cost</div>
<div class="t" style="left:256.3px;top:405.6px;width:54.5px;text-align:right;font-size:8.2px;color:#2f6eb0;font-weight:normal">(3,500)</div>
<div class="t" style="left:311.6px;top:405.6px;width:54.5px;text-align:right;font-size:8.2px;color:#2f6eb0;font-weight:normal">(3,500)</div>
<div class="t" style="left:366.9px;top:405.6px;width:54.5px;text-align:right;font-size:8.2px;color:#2f6eb0;font-weight:normal">(3,500)</div>
<div class="t" style="left:422.2px;top:405.6px;width:54.5px;text-align:right;font-size:8.2px;color:#2f6eb0;font-weight:normal">(3,500)</div>
<div class="t" style="left:477.5px;top:405.6px;width:54.5px;text-align:right;font-size:8.2px;color:#2f6eb0;font-weight:normal">(3,500)</div>
<div class="t" style="left:532.8px;top:405.6px;width:52.1px;text-align:right;font-size:8.2px;color:#a6a6a6">-</div>
<div class="t" style="left:588.1px;top:405.6px;width:52.1px;text-align:right;font-size:8.2px;color:#a6a6a6">-</div>
<div class="t" style="left:643.5px;top:405.6px;width:52.1px;text-align:right;font-size:8.2px;color:#a6a6a6">-</div>
<div class="t" style="left:698.8px;top:405.6px;width:52.1px;text-align:right;font-size:8.2px;color:#a6a6a6">-</div>
<div class="t" style="left:754.1px;top:405.6px;width:52.1px;text-align:right;font-size:8.2px;color:#a6a6a6">-</div>
<div class="t" style="left:809.4px;top:405.6px;width:52.1px;text-align:right;font-size:8.2px;color:#a6a6a6">-</div>
<div class="t" style="left:864.7px;top:405.6px;width:52.1px;text-align:right;font-size:8.2px;color:#a6a6a6">-</div>
<div class="t" style="left:920.0px;top:405.6px;width:53.8px;text-align:right;font-size:8.2px;color:#2f6eb0;font-weight:normal">(17,500)</div>
<div class="t" style="left:44.5px;top:418.1px;font-size:8.2px;color:#2f6eb0;font-weight:normal">Transportation Cost</div>
<div class="t" style="left:256.3px;top:418.1px;width:54.5px;text-align:right;font-size:8.2px;color:#2f6eb0;font-weight:normal">(1,000)</div>
<div class="t" style="left:311.6px;top:418.1px;width:54.5px;text-align:right;font-size:8.2px;color:#2f6eb0;font-weight:normal">(1,000)</div>
<div class="t" style="left:366.9px;top:418.1px;width:54.5px;text-align:right;font-size:8.2px;color:#2f6eb0;font-weight:normal">(1,000)</div>
<div class="t" style="left:422.2px;top:418.1px;width:54.5px;text-align:right;font-size:8.2px;color:#2f6eb0;font-weight:normal">(1,000)</div>
<div class="t" style="left:477.5px;top:418.1px;width:54.5px;text-align:right;font-size:8.2px;color:#2f6eb0;font-weight:normal">(1,000)</div>
<div class="t" style="left:532.8px;top:418.1px;width:52.1px;text-align:right;font-size:8.2px;color:#a6a6a6">-</div>
<div class="t" style="left:588.1px;top:418.1px;width:52.1px;text-align:right;font-size:8.2px;color:#a6a6a6">-</div>
<div class="t" style="left:643.5px;top:418.1px;width:52.1px;text-align:right;font-size:8.2px;color:#a6a6a6">-</div>
<div class="t" style="left:698.8px;top:418.1px;width:52.1px;text-align:right;font-size:8.2px;color:#a6a6a6">-</div>
<div class="t" style="left:754.1px;top:418.1px;width:52.1px;text-align:right;font-size:8.2px;color:#a6a6a6">-</div>
<div class="t" style="left:809.4px;top:418.1px;width:52.1px;text-align:right;font-size:8.2px;color:#a6a6a6">-</div>
<div class="t" style="left:864.7px;top:418.1px;width:52.1px;text-align:right;font-size:8.2px;color:#a6a6a6">-</div>
<div class="t" style="left:920.0px;top:418.1px;width:53.8px;text-align:right;font-size:8.2px;color:#2f6eb0;font-weight:normal">(5,000)</div>
<div class="t" style="left:44.5px;top:430.6px;font-size:8.2px;color:#2f6eb0;font-weight:normal">Labor Cost</div>
<div class="t" style="left:256.3px;top:430.6px;width:54.5px;text-align:right;font-size:8.2px;color:#2f6eb0;font-weight:normal">(2,000)</div>
<div class="t" style="left:311.6px;top:430.6px;width:54.5px;text-align:right;font-size:8.2px;color:#2f6eb0;font-weight:normal">(2,000)</div>
<div class="t" style="left:366.9px;top:430.6px;width:54.5px;text-align:right;font-size:8.2px;color:#2f6eb0;font-weight:normal">(2,000)</div>
<div class="t" style="left:422.2px;top:430.6px;width:54.5px;text-align:right;font-size:8.2px;color:#2f6eb0;font-weight:normal">(2,000)</div>
<div class="t" style="left:477.5px;top:430.6px;width:54.5px;text-align:right;font-size:8.2px;color:#2f6eb0;font-weight:normal">(2,000)</div>
<div class="t" style="left:532.8px;top:430.6px;width:52.1px;text-align:right;font-size:8.2px;color:#a6a6a6">-</div>
<div class="t" style="left:588.1px;top:430.6px;width:52.1px;text-align:right;font-size:8.2px;color:#a6a6a6">-</div>
<div class="t" style="left:643.5px;top:430.6px;width:52.1px;text-align:right;font-size:8.2px;color:#a6a6a6">-</div>
<div class="t" style="left:698.8px;top:430.6px;width:52.1px;text-align:right;font-size:8.2px;color:#a6a6a6">-</div>
<div class="t" style="left:754.1px;top:430.6px;width:52.1px;text-align:right;font-size:8.2px;color:#a6a6a6">-</div>
<div class="t" style="left:809.4px;top:430.6px;width:52.1px;text-align:right;font-size:8.2px;color:#a6a6a6">-</div>
<div class="t" style="left:864.7px;top:430.6px;width:52.1px;text-align:right;font-size:8.2px;color:#a6a6a6">-</div>
<div class="t" style="left:920.0px;top:430.6px;width:53.8px;text-align:right;font-size:8.2px;color:#2f6eb0;font-weight:normal">(10,000)</div>
<div class="t" style="left:32.0px;top:443.1px;font-size:8.2px;color:#444444;font-weight:bold">Total</div>
<div class="t" style="left:256.3px;top:443.1px;width:54.5px;text-align:right;font-size:8.2px;color:#2f6eb0;font-weight:normal">(20,500)</div>
<div class="t" style="left:311.6px;top:443.1px;width:54.5px;text-align:right;font-size:8.2px;color:#2f6eb0;font-weight:normal">(20,500)</div>
<div class="t" style="left:366.9px;top:443.1px;width:54.5px;text-align:right;font-size:8.2px;color:#2f6eb0;font-weight:normal">(20,500)</div>
<div class="t" style="left:422.2px;top:443.1px;width:54.5px;text-align:right;font-size:8.2px;color:#2f6eb0;font-weight:normal">(20,500)</div>
<div class="t" style="left:477.5px;top:443.1px;width:54.5px;text-align:right;font-size:8.2px;color:#2f6eb0;font-weight:normal">(20,500)</div>
<div class="t" style="left:532.8px;top:443.1px;width:52.1px;text-align:right;font-size:8.2px;color:#a6a6a6">-</div>
<div class="t" style="left:588.1px;top:443.1px;width:52.1px;text-align:right;font-size:8.2px;color:#a6a6a6">-</div>
<div class="t" style="left:643.5px;top:443.1px;width:52.1px;text-align:right;font-size:8.2px;color:#a6a6a6">-</div>
<div class="t" style="left:698.8px;top:443.1px;width:52.1px;text-align:right;font-size:8.2px;color:#a6a6a6">-</div>
<div class="t" style="left:754.1px;top:443.1px;width:52.1px;text-align:right;font-size:8.2px;color:#a6a6a6">-</div>
<div class="t" style="left:809.4px;top:443.1px;width:52.1px;text-align:right;font-size:8.2px;color:#a6a6a6">-</div>
<div class="t" style="left:864.7px;top:443.1px;width:52.1px;text-align:right;font-size:8.2px;color:#a6a6a6">-</div>
<div class="t" style="left:920.0px;top:443.1px;width:53.8px;text-align:right;font-size:8.2px;color:#2f6eb0;font-weight:normal">(102,500)</div>
<div class="t" style="left:32.0px;top:468.1px;font-size:8.2px;color:#444444;font-weight:bold">Misc Operational Costs</div>
<div class="ab" style="left:256px;top:476.3px;width:663.6px;height:62.5px;background:#f2f2f2"></div>
<div class="ab" style="left:256px;top:488.2px;width:663.6px;height:1px;background:#fbfbfb"></div>
<div class="ab" style="left:256px;top:500.7px;width:663.6px;height:1px;background:#fbfbfb"></div>
<div class="ab" style="left:256px;top:513.2px;width:663.6px;height:1px;background:#fbfbfb"></div>
<div class="ab" style="left:256px;top:525.7px;width:663.6px;height:1px;background:#fbfbfb"></div>
<div class="t" style="left:44.5px;top:480.6px;font-size:8.2px;color:#2f6eb0;font-weight:normal">Construction Cost</div>
<div class="t" style="left:256.3px;top:480.6px;width:52.1px;text-align:right;font-size:8.2px;color:#a6a6a6">-</div>
<div class="t" style="left:311.6px;top:480.6px;width:52.1px;text-align:right;font-size:8.2px;color:#a6a6a6">-</div>
<div class="t" style="left:366.9px;top:480.6px;width:52.1px;text-align:right;font-size:8.2px;color:#a6a6a6">-</div>
<div class="t" style="left:422.2px;top:480.6px;width:52.1px;text-align:right;font-size:8.2px;color:#a6a6a6">-</div>
<div class="t" style="left:477.5px;top:480.6px;width:52.1px;text-align:right;font-size:8.2px;color:#a6a6a6">-</div>
<div class="t" style="left:532.8px;top:480.6px;width:52.1px;text-align:right;font-size:8.2px;color:#a6a6a6">-</div>
<div class="t" style="left:588.1px;top:480.6px;width:52.1px;text-align:right;font-size:8.2px;color:#a6a6a6">-</div>
<div class="t" style="left:643.5px;top:480.6px;width:52.1px;text-align:right;font-size:8.2px;color:#a6a6a6">-</div>
<div class="t" style="left:698.8px;top:480.6px;width:52.1px;text-align:right;font-size:8.2px;color:#a6a6a6">-</div>
<div class="t" style="left:754.1px;top:480.6px;width:52.1px;text-align:right;font-size:8.2px;color:#a6a6a6">-</div>
<div class="t" style="left:809.4px;top:480.6px;width:52.1px;text-align:right;font-size:8.2px;color:#a6a6a6">-</div>
<div class="t" style="left:864.7px;top:480.6px;width:52.1px;text-align:right;font-size:8.2px;color:#a6a6a6">-</div>
<div class="t" style="left:920.0px;top:480.6px;width:51.8px;text-align:right;font-size:8.2px;color:#9c9c9c">-</div>
<div class="t" style="left:44.5px;top:493.1px;font-size:8.2px;color:#2f6eb0;font-weight:normal">Overhaul Cost</div>
<div class="t" style="left:256.3px;top:493.1px;width:52.1px;text-align:right;font-size:8.2px;color:#a6a6a6">-</div>
<div class="t" style="left:311.6px;top:493.1px;width:52.1px;text-align:right;font-size:8.2px;color:#a6a6a6">-</div>
<div class="t" style="left:366.9px;top:493.1px;width:52.1px;text-align:right;font-size:8.2px;color:#a6a6a6">-</div>
<div class="t" style="left:422.2px;top:493.1px;width:52.1px;text-align:right;font-size:8.2px;color:#a6a6a6">-</div>
<div class="t" style="left:477.5px;top:493.1px;width:52.1px;text-align:right;font-size:8.2px;color:#a6a6a6">-</div>
<div class="t" style="left:532.8px;top:493.1px;width:52.1px;text-align:right;font-size:8.2px;color:#a6a6a6">-</div>
<div class="t" style="left:588.1px;top:493.1px;width:52.1px;text-align:right;font-size:8.2px;color:#a6a6a6">-</div>
<div class="t" style="left:643.5px;top:493.1px;width:52.1px;text-align:right;font-size:8.2px;color:#a6a6a6">-</div>
<div class="t" style="left:698.8px;top:493.1px;width:52.1px;text-align:right;font-size:8.2px;color:#a6a6a6">-</div>
<div class="t" style="left:754.1px;top:493.1px;width:52.1px;text-align:right;font-size:8.2px;color:#a6a6a6">-</div>
<div class="t" style="left:809.4px;top:493.1px;width:52.1px;text-align:right;font-size:8.2px;color:#a6a6a6">-</div>
<div class="t" style="left:864.7px;top:493.1px;width:52.1px;text-align:right;font-size:8.2px;color:#a6a6a6">-</div>
<div class="t" style="left:920.0px;top:493.1px;width:51.8px;text-align:right;font-size:8.2px;color:#9c9c9c">-</div>
<div class="t" style="left:44.5px;top:505.6px;font-size:8.2px;color:#2f6eb0;font-weight:normal">Transportation Cost</div>
<div class="t" style="left:256.3px;top:505.6px;width:52.1px;text-align:right;font-size:8.2px;color:#a6a6a6">-</div>
<div class="t" style="left:311.6px;top:505.6px;width:52.1px;text-align:right;font-size:8.2px;color:#a6a6a6">-</div>
<div class="t" style="left:366.9px;top:505.6px;width:52.1px;text-align:right;font-size:8.2px;color:#a6a6a6">-</div>
<div class="t" style="left:422.2px;top:505.6px;width:52.1px;text-align:right;font-size:8.2px;color:#a6a6a6">-</div>
<div class="t" style="left:477.5px;top:505.6px;width:52.1px;text-align:right;font-size:8.2px;color:#a6a6a6">-</div>
<div class="t" style="left:532.8px;top:505.6px;width:52.1px;text-align:right;font-size:8.2px;color:#a6a6a6">-</div>
<div class="t" style="left:588.1px;top:505.6px;width:52.1px;text-align:right;font-size:8.2px;color:#a6a6a6">-</div>
<div class="t" style="left:643.5px;top:505.6px;width:52.1px;text-align:right;font-size:8.2px;color:#a6a6a6">-</div>
<div class="t" style="left:698.8px;top:505.6px;width:52.1px;text-align:right;font-size:8.2px;color:#a6a6a6">-</div>
<div class="t" style="left:754.1px;top:505.6px;width:52.1px;text-align:right;font-size:8.2px;color:#a6a6a6">-</div>
<div class="t" style="left:809.4px;top:505.6px;width:52.1px;text-align:right;font-size:8.2px;color:#a6a6a6">-</div>
<div class="t" style="left:864.7px;top:505.6px;width:52.1px;text-align:right;font-size:8.2px;color:#a6a6a6">-</div>
<div class="t" style="left:920.0px;top:505.6px;width:51.8px;text-align:right;font-size:8.2px;color:#9c9c9c">-</div>
<div class="t" style="left:44.5px;top:518.1px;font-size:8.2px;color:#2f6eb0;font-weight:normal">Labor Cost</div>
<div class="t" style="left:920.0px;top:518.1px;width:51.8px;text-align:right;font-size:8.2px;color:#9c9c9c">-</div>
<div class="t" style="left:32.0px;top:530.6px;font-size:8.2px;color:#444444;font-weight:bold">Total</div>
<div class="t" style="left:256.3px;top:530.6px;width:52.1px;text-align:right;font-size:8.2px;color:#a6a6a6">-</div>
<div class="t" style="left:311.6px;top:530.6px;width:52.1px;text-align:right;font-size:8.2px;color:#a6a6a6">-</div>
<div class="t" style="left:366.9px;top:530.6px;width:52.1px;text-align:right;font-size:8.2px;color:#a6a6a6">-</div>
<div class="t" style="left:422.2px;top:530.6px;width:52.1px;text-align:right;font-size:8.2px;color:#a6a6a6">-</div>
<div class="t" style="left:477.5px;top:530.6px;width:52.1px;text-align:right;font-size:8.2px;color:#a6a6a6">-</div>
<div class="t" style="left:532.8px;top:530.6px;width:52.1px;text-align:right;font-size:8.2px;color:#a6a6a6">-</div>
<div class="t" style="left:588.1px;top:530.6px;width:52.1px;text-align:right;font-size:8.2px;color:#a6a6a6">-</div>
<div class="t" style="left:643.5px;top:530.6px;width:52.1px;text-align:right;font-size:8.2px;color:#a6a6a6">-</div>
<div class="t" style="left:698.8px;top:530.6px;width:52.1px;text-align:right;font-size:8.2px;color:#a6a6a6">-</div>
<div class="t" style="left:754.1px;top:530.6px;width:52.1px;text-align:right;font-size:8.2px;color:#a6a6a6">-</div>
<div class="t" style="left:809.4px;top:530.6px;width:52.1px;text-align:right;font-size:8.2px;color:#a6a6a6">-</div>
<div class="t" style="left:864.7px;top:530.6px;width:52.1px;text-align:right;font-size:8.2px;color:#a6a6a6">-</div>
<div class="t" style="left:920.0px;top:530.6px;width:51.8px;text-align:right;font-size:8.2px;color:#9c9c9c">-</div>
<div class="t" style="left:32.0px;top:555.6px;font-size:8.2px;color:#444444;font-weight:bold">Digital and Technology</div>
<div class="ab" style="left:987px;top:49px;width:13px;height:510px;background:#f7f7f7;border-left:1px solid #e2e2e2;box-sizing:border-box"></div>
<svg class="ab" style="left:990px;top:53px" width="8" height="7" viewBox="0 0 8 7"><path d="M1 6 L4 1.5 L7 6Z" fill="#6b6b6b"/></svg>
<div class="ab" style="left:991px;top:62.4px;width:6px;height:246px;background:#6e6e6e;border-radius:3px"></div>
<svg class="ab" style="left:990px;top:552px" width="8" height="7" viewBox="0 0 8 7"><path d="M1 1 L4 5.5 L7 1Z" fill="#6b6b6b"/></svg>
<div class="ab" style="left:0;top:558.2px;width:1000px;height:20.3px;background:#e7e9ec"></div>
<svg class="ab" style="left:15px;top:566px" width="6" height="8" viewBox="0 0 6 8"><path d="M4.5 1 L1.5 4 L4.5 7" fill="none" stroke="#8a8a8a" stroke-width="1"/></svg>
<svg class="ab" style="left:37px;top:566px" width="6" height="8" viewBox="0 0 6 8"><path d="M1.5 1 L4.5 4 L1.5 7" fill="none" stroke="#555" stroke-width="1"/></svg>
<div class="ab" style="left:56.5px;top:568.3px;width:1.6px;height:1.6px;background:#333;border-radius:0.4px"></div>
<div class="ab" style="left:59.5px;top:568.3px;width:1.6px;height:1.6px;background:#333;border-radius:0.4px"></div>
<div class="ab" style="left:62.5px;top:568.3px;width:1.6px;height:1.6px;background:#333;border-radius:0.4px"></div>
<div class="t" style="left:80px;top:566px;font-size:8.8px;color:#2a2a2a">2028 MRR Dashboard</div>
<div class="ab" style="left:179px;top:562px;width:40px;height:16px;background:#f9fa8e"></div>
<div class="t" style="left:186px;top:566px;font-size:8.8px;color:#2a2a2a">IS 2028</div>
<div class="ab" style="left:224.5px;top:562px;width:45.5px;height:16px;background:#f9fa8e"></div>
<div class="t" style="left:231px;top:566px;font-size:8.8px;color:#2a2a2a">CF 2028</div>
<div class="t" style="left:280.6px;top:566px;font-size:8.8px;color:#2a2a2a">BS 2028</div>
<div class="t" style="left:331.7px;top:566px;font-size:8.8px;color:#2a2a2a">Statements Summary 2028</div>
<div class="ab" style="left:450.7px;top:562px;width:61.30000000000001px;height:16px;background:#f9fa8e"></div>
<div class="t" style="left:457.5px;top:566px;font-size:8.8px;color:#2a2a2a">CAPEX 2028</div>
<div class="ab" style="left:515px;top:558px;width:58px;height:20px;background:#fff"></div>
<div class="t" style="left:523px;top:564.5px;font-size:8.3px;color:#1b1b1b;font-weight:bold">OPEX 2028</div>
<div class="ab" style="left:523px;top:575px;width:45px;height:1.2px;background:#1e7145"></div>
<div class="ab" style="left:578px;top:562px;width:71.70000000000005px;height:16px;background:#f9fa8e"></div>
<div class="t" style="left:585.8px;top:566px;font-size:8.8px;color:#2a2a2a">2029 Accounts</div>
<div class="t" style="left:663.4px;top:566px;font-size:8.8px;color:#2a2a2a">2029 MRR Dashboard</div>
<div class="ab" style="left:762px;top:562px;width:41px;height:16px;background:#f9fa8e"></div>
<div class="t" style="left:769px;top:566px;font-size:8.8px;color:#2a2a2a">IS 2029</div>
<div class="ab" style="left:809.7px;top:562px;width:44.299999999999955px;height:16px;background:#f9fa8e"></div>
<div class="t" style="left:814.8px;top:566px;font-size:8.8px;color:#2a2a2a">CF 2029</div>
<div class="ab" style="left:864px;top:560px;width:16px;height:18px;overflow:hidden"><div class="t" style="left:0;top:6px;font-size:8.8px;color:#2a2a2a">BS 2028</div></div>
<div class="ab" style="left:886.5px;top:568.3px;width:1.6px;height:1.6px;background:#333;border-radius:0.4px"></div>
<div class="ab" style="left:889.5px;top:568.3px;width:1.6px;height:1.6px;background:#333;border-radius:0.4px"></div>
<div class="ab" style="left:892.5px;top:568.3px;width:1.6px;height:1.6px;background:#333;border-radius:0.4px"></div>
<div class="ab" style="left:907px;top:569px;width:9px;height:1.1px;background:#444"></div>
<div class="ab" style="left:911px;top:565px;width:1.1px;height:9px;background:#444"></div>
<div class="ab" style="left:931px;top:565px;width:1.5px;height:9px;background:repeating-linear-gradient(#444 0 1.5px, transparent 1.5px 3.5px)"></div>
<svg class="ab" style="left:946px;top:566px" width="5" height="7" viewBox="0 0 5 7"><path d="M4.5 0.5 L0.5 3.5 L4.5 6.5Z" fill="#555"/></svg>
<div class="ab" style="left:954px;top:567px;width:21px;height:5.5px;background:#6e6e6e;border-radius:3px"></div>
<svg class="ab" style="left:981px;top:566px" width="5" height="7" viewBox="0 0 5 7"><path d="M0.5 0.5 L4.5 3.5 L0.5 6.5Z" fill="#555"/></svg>
<div class="ab" style="left:0;top:579.5px;width:1000px;height:11px;background:#f3f3f3"></div>
<div class="t" style="left:7.2px;top:584px;font-size:6.6px;color:#555">Ready</div>
<svg class="ab" style="left:40px;top:583px" width="9" height="9" viewBox="0 0 9 9"><rect x="0.5" y="0.5" width="8" height="8" fill="none" stroke="#666" stroke-width="1"/><rect x="2" y="2" width="5" height="3" fill="#888"/></svg>
<svg class="ab" style="left:60px;top:583px" width="9" height="9" viewBox="0 0 9 9"><circle cx="4.5" cy="2" r="1.2" fill="#444"/><path d="M0.5 3.5 H8.5 M4.5 3.5 V6 L2.5 9 M4.5 6 L6.5 9" fill="none" stroke="#444" stroke-width="0.9"/></svg>
<div class="t" style="left:72px;top:584px;font-size:6.6px;color:#222;font-weight:bold">Accessibility: Investigate</div>
<div class="ab" style="left:810px;top:580px;width:18px;height:10px;background:#dcdcdc"></div>
<svg class="ab" style="left:814px;top:583px" width="9" height="9" viewBox="0 0 9 9"><rect x="0.5" y="0.5" width="8" height="8" fill="none" stroke="#555" stroke-width="1"/><path d="M0.5 3.5 H8.5 M3.5 0.5 V8.5 M5.5 0.5 V8.5" stroke="#555" stroke-width="0.8"/></svg>
<svg class="ab" style="left:841px;top:583px" width="9" height="9" viewBox="0 0 9 9"><rect x="0.5" y="0.5" width="8" height="8" fill="none" stroke="#555" stroke-width="1"/><path d="M0.5 3.5 H8.5 M3.5 0.5 V8.5 M5.5 0.5 V8.5" stroke="#555" stroke-width="0.8"/></svg>
<svg class="ab" style="left:867px;top:583px" width="9" height="9" viewBox="0 0 9 9"><rect x="0.5" y="0.5" width="8" height="8" fill="none" stroke="#555" stroke-width="1"/><path d="M0.5 3.5 H8.5 M3.5 0.5 V8.5 M5.5 0.5 V8.5" stroke="#555" stroke-width="0.8"/></svg>
<div class="ab" style="left:888.5px;top:587px;width:4px;height:1px;background:#666"></div>
<div class="ab" style="left:894px;top:587px;width:72px;height:1px;background:#888"></div>
<div class="ab" style="left:927.5px;top:584px;width:2.5px;height:7px;background:#444"></div>
<div class="t" style="left:965px;top:582.5px;font-size:8px;color:#555">+</div>
<div class="t" style="left:978px;top:584.5px;font-size:7px;color:#444">100%</div>
</body></html>
